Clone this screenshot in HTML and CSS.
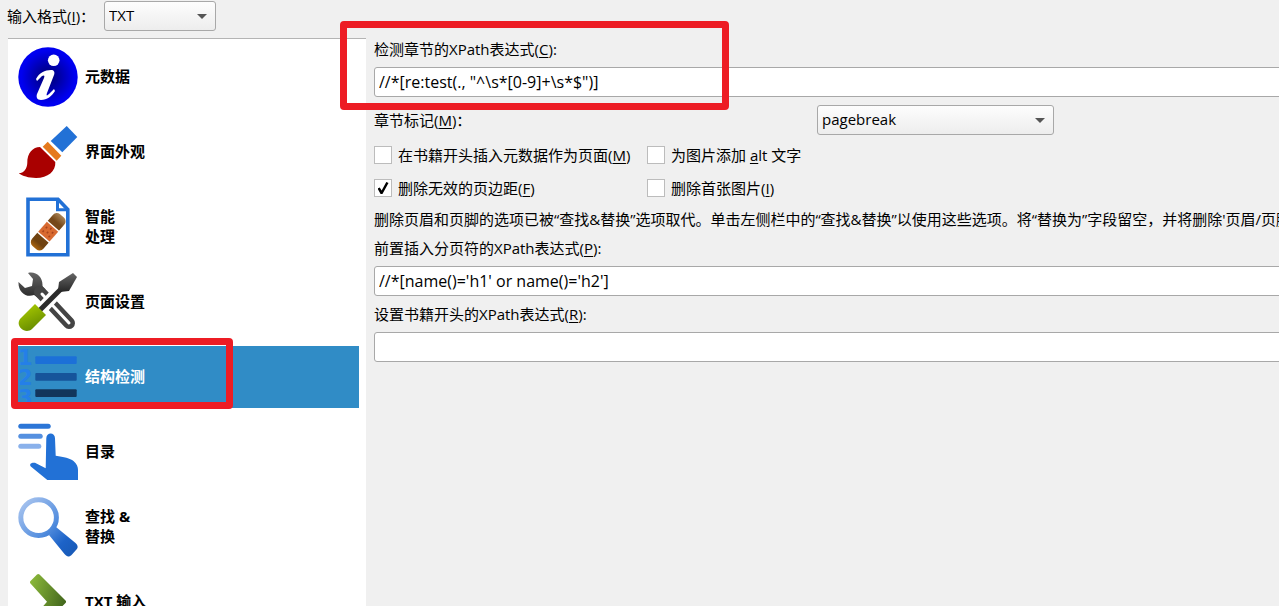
FILE: index.html
```
<!DOCTYPE html>
<html lang="zh-CN">
<head>
    <meta charset="UTF-8">
    <title>结构检测</title>
    <link rel="stylesheet" href="styles.css">
</head>
<body>
    <div class="dialog">
        <div class="topbar">
            <label for="format">输入格式(<u>I</u>)：</label>
            <div class="combo formatCombo">
                <select id="format"><option>TXT</option></select>
            </div>
        </div>

        <div class="content">
            <nav class="sidebar">
                <a href="#" class="item">
                    <svg class="icon" viewBox="0 0 60 60">
                        <defs>
                            <radialGradient id="info"><stop offset="0" stop-color="#00006e"/><stop offset="0.9" stop-color="#0000f0"/></radialGradient>
                        </defs>
                        <circle cx="30" cy="30" r="29.7" fill="url(#info)"/>
                        <circle cx="35.7" cy="13.3" r="5.8" fill="#fff"/>
                        <path d="M18 32C21 26 27 23 33 23C36 23 37 25 36 28L29 46C28 49 29 49 31 47L36 42L37 44C34 49 29 53 23 53C19 53 18 50 19 47L26 31C27 28 26 28 24 29L19 34Z" fill="#fff"/>
                    </svg>
                    <span>元数据</span>
                </a>
                <a href="#" class="item">
                    <svg class="icon" viewBox="0 0 60 60">
                        <path d="M48.7 4L59.3 15L44.3 30.3L32.7 19Z" fill="#2271d6"/>
                        <path d="M29.7 19.7L43.3 33.7L38.7 38.7L24.7 24.7Z" fill="#e57a1e"/>
                        <path d="M0.7 51.3C6 51 9 47 9.3 41C9 31 15 25 22 25L37.3 40C38 49 30 56 18 56C10 56 5 54 0.7 51.3Z" fill="#a90000"/>
                    </svg>
                    <span>界面外观</span>
                </a>
                <a href="#" class="item">
                    <svg class="icon" viewBox="0 0 60 60">
                        <defs>
                            <linearGradient id="strip"><stop offset="0" stop-color="#a9640f"/><stop offset="0.15" stop-color="#70420f"/><stop offset="0.8" stop-color="#75481a"/><stop offset="1" stop-color="#a98355"/></linearGradient>
                        </defs>
                        <path d="M10 2.2H40L49.8 12.4V57.8H10Z" fill="#fff" stroke="#2271d6" stroke-width="3.6"/>
                        <path d="M39.5 2V12.8H50" fill="none" stroke="#2271d6" stroke-width="3"/>
                        <g transform="translate(30.2 34.7) rotate(-49)">
                            <rect x="-21" y="-7.5" width="42" height="15" rx="5" fill="url(#strip)"/>
                            <rect x="-8" y="-8" width="16" height="16" fill="#fff"/>
                            <rect x="-6.6" y="-7.5" width="13.2" height="15" fill="#d86a30"/>
                            <path d="M-4 -4h2M1 -4h2M-2 0h2M3 0h2M-4 4h2M1 4h2" stroke="#a9441c" stroke-width="1.6"/>
                        </g>
                    </svg>
                    <span>智能<br>处理</span>
                </a>
                <a href="#" class="item">
                    <svg class="icon" viewBox="0 0 60 60">
                        <defs>
                            <linearGradient id="steel" x2="0" y2="1"><stop offset="0" stop-color="#666"/><stop offset="1" stop-color="#262626"/></linearGradient>
                            <linearGradient id="grip" x1="0" y1="0" x2="0.5" y2="1"><stop offset="0" stop-color="#b2d300"/><stop offset="1" stop-color="#668b00"/></linearGradient>
                        </defs>
                        <path d="M10 1C18 -1 25 5 24.5 14L29 20L22 27L16 23C8 26 0 20 0.5 10L7 16L14 14L15 7Z" fill="url(#steel)"/>
                        <path d="M22 20L51 51" stroke="#444" stroke-width="12" stroke-linecap="round"/>
                        <path d="M24 22L51 51" stroke="#fff" stroke-width="3" stroke-linecap="round"/>
                        <path d="M20 41L44 15" stroke="#fff" stroke-width="12"/>
                        <path d="M21 39L44 16" stroke="#2b2b2b" stroke-width="5"/>
                        <path d="M41 10L55 1L59 5L51 19L42 20L40 18Z" fill="url(#steel)"/>
                        <path d="M17 32L28 43L14 57C7 63 -3 54 2 47Z" fill="url(#grip)"/>
                    </svg>
                    <span>页面设置</span>
                </a>
                <a href="#" class="item selected">
                    <svg class="icon" viewBox="0 0 60 60">
                        <text class="digit" x="0" y="18">1</text>
                        <text class="digit" x="0" y="38">2</text>
                        <text class="digit" x="0" y="58">3</text>
                        <rect x="17.3" y="9.3" width="41.4" height="7.7" rx="1" fill="#1c70d8"/>
                        <rect x="17.3" y="26" width="41.4" height="7.7" rx="1" fill="#16549b"/>
                        <rect x="17.3" y="42.3" width="41.4" height="7.7" rx="1" fill="#12365c"/>
                    </svg>
                    <span>结构检测</span>
                    <div class="mark itemMark"></div>
                </a>
                <a href="#" class="item">
                    <svg class="icon" viewBox="0 0 60 60">
                        <path d="M2.8 4.3H30.2" stroke="#2c76d7" stroke-width="5" stroke-linecap="round"/>
                        <path d="M2.8 14.3H22.2" stroke="#5590e0" stroke-width="5" stroke-linecap="round"/>
                        <path d="M2.8 24.3H20.8" stroke="#8ab1eb" stroke-width="5" stroke-linecap="round"/>
                        <path d="M28.3 16.3C28.3 10 37 10 37 16.3L37.7 33.7C46 35 52 36 55.5 39C59 42 60 45 60 48V58H29.3L12.8 44.5C11 42 13 40.3 17 40.7L27.7 46.3Z" fill="#2271d6"/>
                    </svg>
                    <span>目录</span>
                </a>
                <a href="#" class="item">
                    <svg class="icon" viewBox="0 0 60 60">
                        <defs>
                            <linearGradient id="lens" gradientUnits="userSpaceOnUse" x1="5" y1="5" x2="55" y2="55"><stop offset="0" stop-color="#a5c2ee"/><stop offset="0.5" stop-color="#5790df"/><stop offset="0.8" stop-color="#1d63c8"/><stop offset="1" stop-color="#195bb9"/></linearGradient>
                        </defs>
                        <circle cx="20.6" cy="20.6" r="17.8" fill="none" stroke="url(#lens)" stroke-width="5"/>
                        <path d="M38 30L57.5 46C60.5 49 60 51 58 53L54 57.5C51 60.5 49 60 46.5 57L31 38Z" fill="url(#lens)"/>
                    </svg>
                    <span>查找 &amp;<br>替换</span>
                </a>
                <a href="#" class="item">
                    <svg class="icon" viewBox="0 0 60 60">
                        <defs>
                            <linearGradient id="leaf" x2="1" y2="0.5"><stop offset="0" stop-color="#8fbd3c"/><stop offset="1" stop-color="#42661c"/></linearGradient>
                        </defs>
                        <path d="M12.5 9L19 2.5Q20.3 1.4 21.5 2.5L47.5 28.5Q48.6 29.7 47.5 31L21.5 57L12.5 49L29 29.7L12.5 11.5Q11.5 10.2 12.5 9Z" fill="url(#leaf)"/>
                    </svg>
                    <span>TXT 输入</span>
                </a>
            </nav>

            <main class="panel">
                <div class="field">
                    <label for="chapter">检测章节的XPath表达式(<u>C</u>):</label>
                    <input type="text" id="chapter" value="//*[re:test(., &quot;^\s*[0-9]+\s*$&quot;)]">
                    <div class="mark fieldMark"></div>
                </div>

                <div class="markRow">
                    <label for="chapterMark">章节标记(<u>M</u>)：</label>
                    <div class="combo">
                        <select id="chapterMark"><option>pagebreak</option></select>
                    </div>
                </div>

                <div class="checks">
                    <label><input type="checkbox">在书籍开头插入元数据作为页面(<u>M</u>)</label>
                    <label><input type="checkbox">为图片添加 <u>a</u>lt 文字</label>
                    <label><input type="checkbox" checked>删除无效的页边距(<u>F</u>)</label>
                    <label><input type="checkbox">删除首张图片(<u>I</u>)</label>
                </div>

                <p class="note">删除页眉和页脚的选项已被“查找&amp;替换”选项取代。单击左侧栏中的“查找&amp;替换”以使用这些选项。将“替换为”字段留空，并将删除'页眉/页脚'</p>

                <div class="field">
                    <label for="breaks">前置插入分页符的XPath表达式(<u>P</u>):</label>
                    <input type="text" id="breaks" value="//*[name()='h1' or name()='h2']">
                </div>

                <div class="field">
                    <label for="start">设置书籍开头的XPath表达式(<u>R</u>):</label>
                    <input type="text" id="start">
                </div>
            </main>
        </div>
    </div>
</body>
</html>
```

FILE: styles.css
```
* {
    box-sizing: border-box;
}
body {
    margin: 0;
    background: #f0f0f0;
    color: #000;
}
body, input, select {
    font-family: "Open Sans", "Noto Sans CJK SC", sans-serif;
    font-size: 15px;
    line-height: 20px;
}
u {
    text-underline-offset: 2px;
}
.dialog {
    display: flex;
    flex-direction: column;
    height: 100vh;
    overflow: hidden;
}
.topbar {
    display: flex;
    align-items: center;
    padding: 1px 7px 7px;
}
.formatCombo {
    width: 112px;
}
.topbar label {
    width: 97px;
    white-space: nowrap;
}
.content {
    display: flex;
    flex: 1;
    min-height: 0;
    padding-left: 8px;
}

/* category list */
.sidebar {
    flex: none;
    display: flex;
    flex-direction: column;
    gap: 13px;
    width: 358px;
    padding: 7px 7px 0 8px;
    background: #fff;
    border-top: 1px solid #b4b4b4;
}
.item {
    position: relative;
    flex: none;
    display: flex;
    align-items: center;
    gap: 7px;
    height: 62px;
    padding-left: 2px;
    color: #000;
    font-weight: bold;
    text-decoration: none;
}
.item span {
    padding-bottom: 2px;
}
.icon {
    width: 60px;
    height: 60px;
}
.selected {
    background: #308cc6;
    color: #fff;
}
.digit {
    font: bold 21px "DejaVu Sans", sans-serif;
    fill: #247fe8;
}

/* settings */
.panel {
    flex: 1 0 auto;
    display: flex;
    flex-direction: column;
    gap: 8px;
    padding: 1px 8px 0;
}
.field {
    position: relative;
    display: flex;
    flex-direction: column;
    gap: 8px;
}
input[type="text"] {
    width: 100%;
    height: 30px;
    padding: 0 4px;
    border: 1px solid #a8a8a8;
    border-radius: 3px;
    background: #fff;
    font-size: 16px;
}
.markRow {
    display: grid;
    grid-template-columns: 443px 237px;
    align-items: center;
}
.combo {
    position: relative;
}
.combo::after {
    content: "";
    position: absolute;
    top: 13px;
    right: 9px;
    border: 5px solid transparent;
    border-top-color: #555;
    border-bottom: 0;
    pointer-events: none;
}
select {
    display: block;
    width: 100%;
    height: 30px;
    padding: 0 4px 2px;
    border: 1px solid #a8a8a8;
    border-radius: 3px;
    background: linear-gradient(#fdfdfd, #ededed);
    color: #000;
    appearance: none;
}
.checks {
    display: grid;
    grid-template-columns: 273px auto;
    grid-auto-rows: 24px;
    row-gap: 9px;
    white-space: pre;
}
.checks label {
    display: flex;
    align-items: center;
}
input[type="checkbox"] {
    appearance: none;
    display: grid;
    place-items: center;
    width: 18px;
    height: 18px;
    margin: 0 6px 0 0;
    border: 1px solid #bcbcbc;
    background: #fff;
}
input[type="checkbox"]:checked::before {
    content: "";
    width: 11px;
    height: 12px;
    background: #000;
    clip-path: polygon(0 55%, 20% 45%, 38% 70%, 80% 0, 100% 8%, 45% 100%, 28% 100%);
}
.note {
    margin: 0;
    line-height: 22px;
    white-space: nowrap;
}

/* red highlight frames */
.mark {
    position: absolute;
    border: 7px solid #ed1c24;
    border-radius: 4px;
    pointer-events: none;
}
.itemMark {
    top: -8px;
    left: -5px;
    width: 222px;
    height: 71px;
}
.fieldMark {
    top: -18px;
    left: -34px;
    width: 389px;
    height: 89px;
}
```
